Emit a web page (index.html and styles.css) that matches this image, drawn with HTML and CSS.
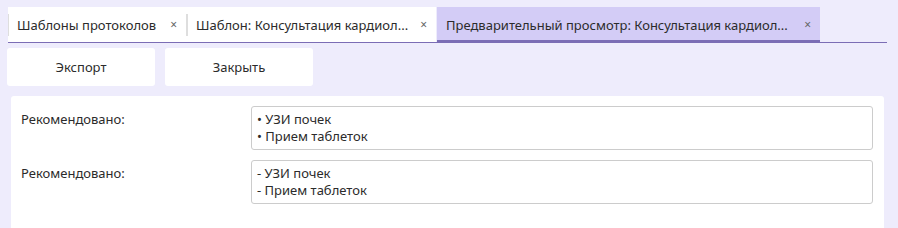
FILE: index.html
```html
<!DOCTYPE html>
<html lang="ru">
<head>
<meta charset="utf-8">
<link rel="stylesheet" href="styles.css">
</head>
<body>
<div class="tabbar">
  <div class="tab tab-1"><span class="tab-title">Шаблоны протоколов</span><span class="tab-close">×</span></div>
  <div class="tab tab-2"><span class="tab-title">Шаблон: Консультация кардиол...</span><span class="tab-close">×</span></div>
  <div class="tab tab-active"><span class="tab-title">Предварительный просмотр: Консультация кардиол...</span><span class="tab-close">×</span></div>
</div>
<div class="toolbar">
  <div class="btn">Экспорт</div>
  <div class="btn">Закрыть</div>
</div>
<div class="panel">
  <div class="row">
    <div class="label">Рекомендовано:</div>
    <div class="box">
      <div>• УЗИ почек</div>
      <div>• Прием таблеток</div>
    </div>
  </div>
  <div class="row">
    <div class="label">Рекомендовано:</div>
    <div class="box">
      <div>- УЗИ почек</div>
      <div>- Прием таблеток</div>
    </div>
  </div>
</div>
</body>
</html>
```
FILE: styles.css
```css
html, body {
  margin: 0;
  padding: 0;
}
body {
  background: #eeecfc;
  font-family: "Noto Sans", "Open Sans", sans-serif;
  font-size: 13px;
  color: #2b2b2b;
}
.tabbar {
  display: flex;
  margin: 7px 11px 0 8px;
  border-bottom: 1px solid #7b6db5;
}
.tab {
  display: flex;
  align-items: center;
  height: 35px;
  box-sizing: border-box;
  padding: 0 9px 0 9px;
  background: linear-gradient(#dedede, #dedede) 0 50% / 1px 22px no-repeat, #ffffff;
  white-space: nowrap;
}
.tab-1 { width: 178px; }
.tab-2 { width: 250px; background: linear-gradient(#dedede, #dedede) 0 50% / 2px 22px no-repeat, #ffffff; padding-left: 10px; }
.tab-active {
  width: 383px;
  margin-left: 1px;
  background: #d3ccf6;
  box-shadow: inset 0 -2px 0 #7b6db5;
}
.tab-title {
  flex: 1;
}
.tab-close {
  color: #666;
  font-size: 12px;
}
.toolbar {
  display: flex;
  gap: 10px;
  padding: 5px 0 0 7px;
}
.btn {
  width: 148px;
  height: 38px;
  display: flex;
  align-items: center;
  justify-content: center;
  background: #fff;
  border-radius: 3px;
}
.panel {
  margin: 10px 14px 0 11px;
  background: #fff;
  border-radius: 3px 3px 0 0;
  padding: 10px 11px 24px 10px;
  display: flex;
  flex-direction: column;
  gap: 10px;
}
.row {
  display: flex;
}
.label {
  width: 230px;
  padding-top: 5px;
  line-height: 17px;
}
.box {
  flex: 1;
  height: 44px;
  box-sizing: border-box;
  border: 1px solid #cccccc;
  border-radius: 3px;
  padding: 4px 5px;
  line-height: 17px;
}
```
